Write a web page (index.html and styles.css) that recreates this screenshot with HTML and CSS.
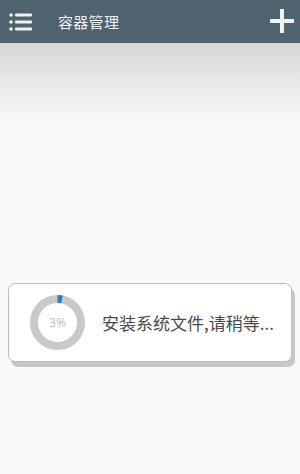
FILE: index.html
```html
<!DOCTYPE html>
<html>
<head>
<meta charset="utf-8">
<link rel="stylesheet" href="styles.css">
</head>
<body>
<div class="app">
  <header class="bar">
    <svg class="menu" width="24" height="20" viewBox="0 0 24 20">
      <g fill="#eef2f3">
        <circle cx="2" cy="3" r="1.8"/>
        <circle cx="2" cy="10" r="1.8"/>
        <circle cx="2" cy="17" r="1.8"/>
        <rect x="6" y="1.5" width="17" height="3" rx="1"/>
        <rect x="6" y="8.5" width="17" height="3" rx="1"/>
        <rect x="6" y="15.5" width="17" height="3" rx="1"/>
      </g>
    </svg>
    <span class="title">容器管理</span>
    <svg class="plus" width="24" height="24" viewBox="0 0 24 24">
      <g fill="#eef2f3">
        <rect x="0" y="10" width="24" height="4"/>
        <rect x="10" y="0" width="4" height="24"/>
      </g>
    </svg>
  </header>
  <main class="content">
    <div class="dialog">
      <div class="ring">
        <svg width="55" height="55" viewBox="0 0 55 55">
          <circle cx="27.5" cy="27.5" r="23.5" fill="none" stroke="#c9c9c9" stroke-width="8"/>
          <circle cx="27.5" cy="27.5" r="23.5" fill="none" stroke="#2b7fc0" stroke-width="8" stroke-dasharray="4.6 200" transform="rotate(-90 27.5 27.5)"/>
        </svg>
        <span class="pct">3%</span>
      </div>
      <span class="msg">安装系统文件,请稍等...</span>
    </div>
  </main>
</div>
</body>
</html>
```
FILE: styles.css
```css
html, body {
  margin: 0;
  padding: 0;
}
body {
  width: 300px;
  height: 474px;
  overflow: hidden;
  background: #f9f9f9;
  font-family: "Noto Sans CJK SC", "Noto Sans", sans-serif;
}
.app {
  display: flex;
  flex-direction: column;
  height: 474px;
}
.bar {
  height: 43px;
  flex: none;
  background: #4e636d;
  border-bottom: 1px solid #c9d1d5;
  display: flex;
  align-items: center;
  padding: 0 6px 0 9px;
}
.menu {
  flex: none;
}
.title {
  margin-left: 25px;
  color: #eef2f3;
  font-size: 15px;
  line-height: 1;
  flex: 1;
  letter-spacing: 0.3px;
}
.plus {
  flex: none;
  margin-bottom: 2px;
}
.content {
  flex: 1;
  background: linear-gradient(to bottom, #d6d6d6 0px, #ececec 45px, #f9f9f9 80px, #f9f9f9 100%);
  padding-top: 239px;
}
.dialog {
  margin: 0 8px;
  box-sizing: border-box;
  height: 79px;
  background: #fff;
  border: 1px solid #bcbcbc;
  border-radius: 7px;
  box-shadow: 3px 5px 0 #c6c6c6;
  display: flex;
  align-items: center;
  padding-left: 21px;
}
.ring {
  position: relative;
  width: 55px;
  height: 55px;
  flex: none;
  display: flex;
  align-items: center;
  justify-content: center;
}
.ring svg {
  position: absolute;
  left: 0;
  top: 0;
}
.pct {
  position: relative;
  font-size: 12px;
  color: #bdbdbd;
  font-family: "Open Sans", "Noto Sans", sans-serif;
}
.msg {
  margin-left: 17px;
  font-size: 17px;
  color: #4a4a4a;
  white-space: nowrap;
}
```
